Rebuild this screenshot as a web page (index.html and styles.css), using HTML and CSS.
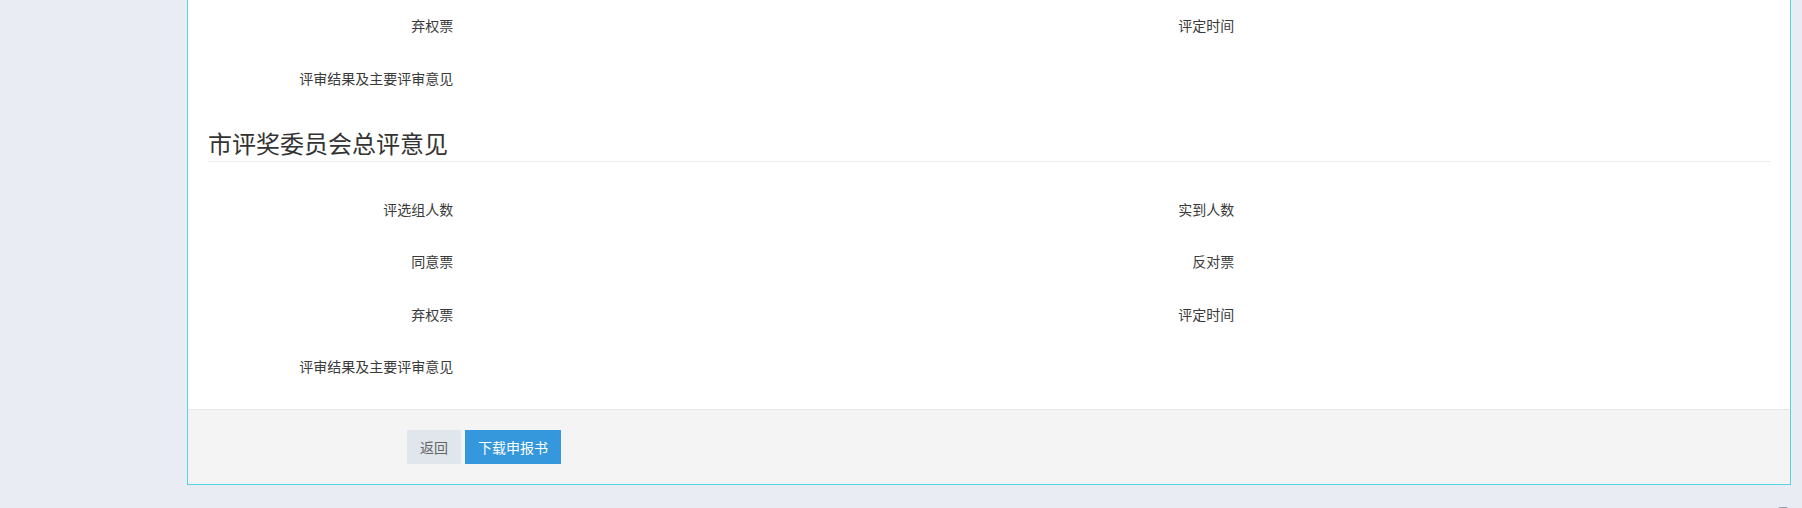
FILE: index.html
```html
<html>
    <head>
        <meta charset="utf-8">
        <title>评审意见</title>
        <link rel="stylesheet" href="styles.css">
    </head>
    <body>
        <div class="page">
            <div class="panel">
                <div class="panel-body">
                    <div class="grid">
                        <div class="row"><label class="lbl">弃权票</label><div class="val"></div></div>
                        <div class="row"><label class="lbl">评定时间</label><div class="val"></div></div>
                        <div class="row"><label class="lbl">评审结果及主要评审意见</label><div class="val"></div></div>
                    </div>

                    <h3 class="section">市评奖委员会总评意见</h3>

                    <div class="grid">
                        <div class="row"><label class="lbl">评选组人数</label><div class="val"></div></div>
                        <div class="row"><label class="lbl">实到人数</label><div class="val"></div></div>
                        <div class="row"><label class="lbl">同意票</label><div class="val"></div></div>
                        <div class="row"><label class="lbl">反对票</label><div class="val"></div></div>
                        <div class="row"><label class="lbl">弃权票</label><div class="val"></div></div>
                        <div class="row"><label class="lbl">评定时间</label><div class="val"></div></div>
                        <div class="row"><label class="lbl">评审结果及主要评审意见</label><div class="val"></div></div>
                    </div>
                </div>
                <div class="actions">
                    <button class="btn btn-default">返回</button>
                    <button class="btn btn-blue">下载申报书</button>
                </div>
            </div>
        </div>
        <div class="go-top"></div>
    </body>
</html>
```

FILE: styles.css
```css
body {
    margin: 0;
    background: #e9ecf3;
    font-family: "Noto Sans CJK SC", "Liberation Sans", sans-serif;
    font-size: 14px;
    color: #333;
}
.page {
    padding-left: 187px;
    padding-right: 11px;
}
.panel {
    background: #fff;
    border: 1px solid #55d3e0;
    border-top: none;
}
.panel-body {
    padding: 8px 20px 26px 20px;
}
.grid {
    display: grid;
    grid-template-columns: 1fr 1fr;
    row-gap: 18.5px;
}
.row {
    display: flex;
    height: 34px;
}
.lbl {
    width: 33.333%;
    box-sizing: border-box;
    padding: 7px 15px 0 0;
    line-height: 20px;
    text-align: right;
    color: #3a3a3a;
}
.val {
    flex: 1;
}
.section {
    margin: 35px 0 30px 0;
    padding-bottom: 5px;
    border-bottom: 1px solid #e7ecf1;
    font-size: 24px;
    font-weight: normal;
    line-height: 26px;
    color: #333;
}
.actions {
    background: #f4f4f4;
    border-top: 1px solid #e7e7e7;
    padding: 20px 0 20px 219px;
    display: flex;
    gap: 4px;
}
.btn {
    font-family: "Noto Sans CJK SC", "Liberation Sans", sans-serif;
    font-size: 14px;
    line-height: 20px;
    padding: 6px 12px;
    border: 1px solid transparent;
    border-radius: 0;
    cursor: pointer;
}
.btn-default {
    background: #e1e5ec;
    border-color: #e1e5ec;
    color: #666;
}
.btn-blue {
    background: #3598dc;
    border-color: #3598dc;
    color: #fff;
}
.go-top {
    position: fixed;
    left: 1778px;
    top: 507px;
    width: 10px;
    height: 4px;
    background: #9aa0aa;
    border-radius: 2px 2px 0 0;
}
```
